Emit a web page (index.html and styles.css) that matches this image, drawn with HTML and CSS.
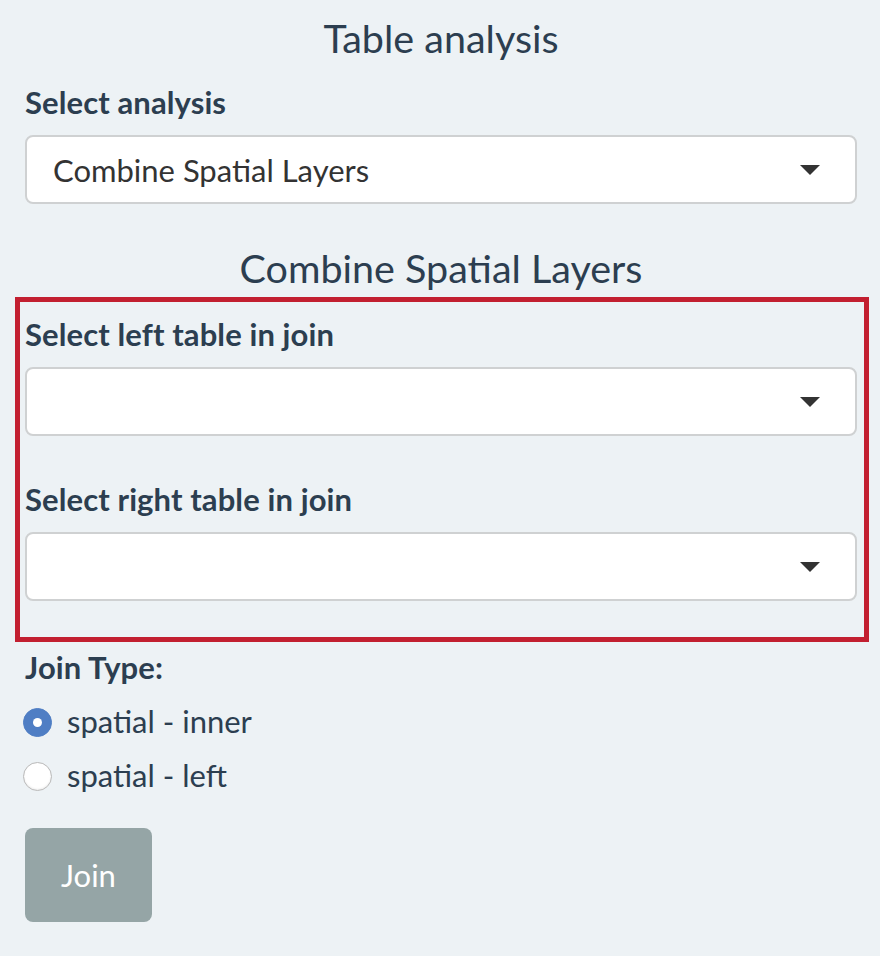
FILE: index.html
```html
<!DOCTYPE html>
<html>
<head>
<meta charset="utf-8">
<link rel="stylesheet" href="styles.css">
</head>
<body>
<div class="panel">
  <h3 class="title">Table analysis</h3>
  <div class="group">
    <label class="lbl">Select analysis</label>
    <div class="select"><span class="value">Combine Spatial Layers</span><span class="caret"></span></div>
  </div>
  <h3 class="subtitle">Combine Spatial Layers</h3>
  <div class="highlight">
    <div class="group">
      <label class="lbl">Select left table in join</label>
      <div class="select"><span class="value"></span><span class="caret"></span></div>
    </div>
    <div class="group group-second">
      <label class="lbl">Select right table in join</label>
      <div class="select"><span class="value"></span><span class="caret"></span></div>
    </div>
  </div>
  <div class="radios">
    <label class="lbl">Join Type:</label>
    <div class="radio-row"><span class="radio checked"></span><span class="radio-text">spatial - inner</span></div>
    <div class="radio-row"><span class="radio"></span><span class="radio-text">spatial - left</span></div>
  </div>
  <button class="btn">Join</button>
</div>
</body>
</html>
```

FILE: styles.css
```css
* { box-sizing: border-box; }
html, body {
  margin: 0;
  padding: 0;
  background: #edf2f5;
  font-family: Lato, "Liberation Sans", sans-serif;
  color: #2c3e50;
}
.panel {
  width: 880px;
  height: 956px;
  padding: 14px 23px 0 25px;
  display: flex;
  flex-direction: column;
}
.title {
  margin: 0;
  font-size: 39.5px;
  line-height: 48px;
  font-weight: 400;
  text-align: center;
}
.lbl {
  display: block;
  font-size: 31px;
  line-height: 38px;
  font-weight: 700;
  margin: 0 0 14.5px 0;
  letter-spacing: 0.1px;
}
.group { margin-top: 20.5px; }
.select {
  height: 69px;
  background: #fff;
  border: 2px solid #cfd1d2;
  border-radius: 8px;
  display: flex;
  align-items: center;
  padding: 0 35px 0 26px;
}
.value {
  flex: 1;
  font-size: 31px;
  line-height: 38px;
  color: #333;
}
.caret {
  width: 0;
  height: 0;
  border-left: 10px solid transparent;
  border-right: 10px solid transparent;
  border-top: 10px solid #333;
}
.subtitle {
  margin: 39.5px 0 0 0;
  font-size: 39.5px;
  line-height: 48px;
  font-weight: 400;
  text-align: center;
}
.highlight {
  margin: 5.5px -12px 0 -10px;
  border: 5px solid #c21f30;
  padding: 12.5px 7px 36px 5px;
}
.highlight .group { margin-top: 0; }
.highlight .group-second { margin-top: 43.5px; }
.radios { margin-top: 5.5px; }
.radios .lbl { margin-bottom: 9.5px; }
.radio-row {
  display: flex;
  align-items: center;
  height: 54px;
}
.radio {
  width: 29px;
  height: 29px;
  border-radius: 50%;
  background: #fff;
  border: 1.5px solid #b8b8b8;
  box-shadow: inset 0 -1px 2px rgba(0,0,0,0.08);
  margin-left: -2px;
  margin-right: 15px;
  position: relative;
  flex: none;
}
.radio.checked {
  background: #4f7ec4;
  border-color: #4f7ec4;
  box-shadow: none;
}
.radio.checked::after {
  content: "";
  position: absolute;
  left: 50%;
  top: 50%;
  width: 9px;
  height: 9px;
  margin: -4.5px 0 0 -4.5px;
  border-radius: 50%;
  background: #fff;
}
.radio-text {
  font-size: 31px;
  line-height: 38px;
  margin-top: -3px;
}
.btn {
  margin-top: 25px;
  align-self: flex-start;
  width: 127px;
  height: 94px;
  background: #95a5a6;
  border: none;
  border-radius: 8px;
  color: #fff;
  font-family: Lato, "Liberation Sans", sans-serif;
  font-size: 31px;
  padding: 0;
}
```
